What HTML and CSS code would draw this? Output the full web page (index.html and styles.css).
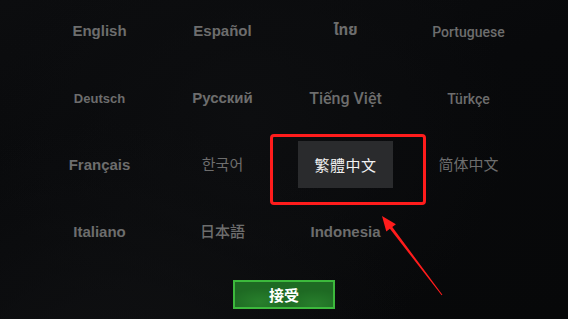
FILE: index.html
```html
<!DOCTYPE html>
<html lang="zh-Hant">
<head>
    <meta charset="UTF-8">
    <meta name="viewport" content="width=device-width, initial-scale=1.0">
    <title>語言選擇</title>
    <link rel="stylesheet" href="styles.css">
</head>
<body>
    <div class="screen">
        <div class="langs">
            <div class="lang">English</div>
            <div class="lang">Español</div>
            <div class="lang thai">ไทย</div>
            <div class="lang roboto medium">Portuguese</div>

            <div class="lang small">Deutsch</div>
            <div class="lang">Русский</div>
            <div class="lang roboto large">Tiếng Việt</div>
            <div class="lang roboto medium">Türkçe</div>

            <div class="lang">Français</div>
            <div class="lang cjk light">한국어</div>
            <div class="lang"><span class="selected">繁體中文</span></div>
            <div class="lang cjk light">简体中文</div>

            <div class="lang">Italiano</div>
            <div class="lang cjk">日本語</div>
            <div class="lang">Indonesia</div>
            <div class="lang"></div>
        </div>

        <div class="actions">
            <button type="button" class="accept-button">接受</button>
        </div>

        <!-- annotation -->
        <div class="mark-box"></div>
        <svg class="mark-arrow" width="568" height="319" viewBox="0 0 568 319">
            <polygon fill="#ff1c1c" points="382,216 395.9,224.3 392.3,227.0 442.4,294.7 441.6,295.3 389.9,228.8 386.3,231.5"/>
        </svg>
    </div>
</body>
</html>
```

FILE: styles.css
```css
html, body {
    margin: 0;
    padding: 0;
}

body {
    font-family: "Liberation Sans", Arial, "Noto Sans CJK TC", sans-serif;
    background-color: #08090b;
}

.screen {
    position: relative;
    width: 568px;
    height: 319px;
    overflow: hidden;
    background:
        radial-gradient(ellipse 300px 260px at 120px 380px, #101113 0%, rgba(16,17,19,0) 100%),
        radial-gradient(ellipse 260px 240px at 250px 120px, #0d0e10 0%, rgba(13,14,16,0) 100%),
        linear-gradient(160deg, #0c0d0f 0%, #08090b 45%, #070809 100%);
}

.langs {
    display: grid;
    grid-template-columns: repeat(4, 123px);
    grid-auto-rows: 67px;
    justify-content: center;
    margin-top: -3px;
}

.lang {
    display: flex;
    align-items: center;
    justify-content: center;
    color: #6d6d6d;
    font-size: 15px;
    font-weight: bold;
    line-height: 1.15;
    white-space: nowrap;
}

.lang.small {
    font-size: 13px;
    padding-top: 3px;
}

.lang.roboto {
    font-family: Roboto, "Liberation Sans", sans-serif;
    font-weight: 500;
    padding-top: 3px;
}

.lang.medium {
    font-size: 14px;
}

.lang.large {
    font-size: 16px;
}

.lang.cjk {
    font-family: "Noto Sans CJK TC", "Noto Sans CJK KR", sans-serif;
    font-weight: 500;
    line-height: 1;
    padding-bottom: 2px;
}

.lang.light {
    font-weight: normal;
}

.lang.thai {
    font-family: "Noto Sans Thai", "Noto Sans", "DejaVu Sans", sans-serif;
    font-weight: bold;
}

.selected {
    display: flex;
    align-items: center;
    justify-content: center;
    width: 95px;
    height: 47px;
    background-color: #2a2b2d;
    color: #f2f2f2;
    font-family: "Noto Sans CJK TC", sans-serif;
    font-weight: normal;
    font-size: 15px;
    letter-spacing: 0.5px;
}

.actions {
    display: flex;
    justify-content: center;
    margin-top: 15px;
}

.accept-button {
    width: 102px;
    height: 29px;
    border: 2px solid #3cb93c;
    background:
        radial-gradient(ellipse 30px 14px at 25px 20px, #28802c 0%, rgba(40,128,44,0) 100%),
        radial-gradient(ellipse 30px 14px at 80px 22px, #287f2c 0%, rgba(40,128,44,0) 100%),
        #1e6a23;
    color: #ffffff;
    font-family: "Noto Sans CJK TC", sans-serif;
    font-weight: bold;
    font-size: 15px;
    padding: 0;
    cursor: pointer;
}

.mark-box {
    position: absolute;
    left: 270px;
    top: 134px;
    width: 150px;
    height: 65px;
    border: 3px solid #ff1c1c;
    border-radius: 4px;
}

.mark-arrow {
    position: absolute;
    left: 0;
    top: 0;
}
```
